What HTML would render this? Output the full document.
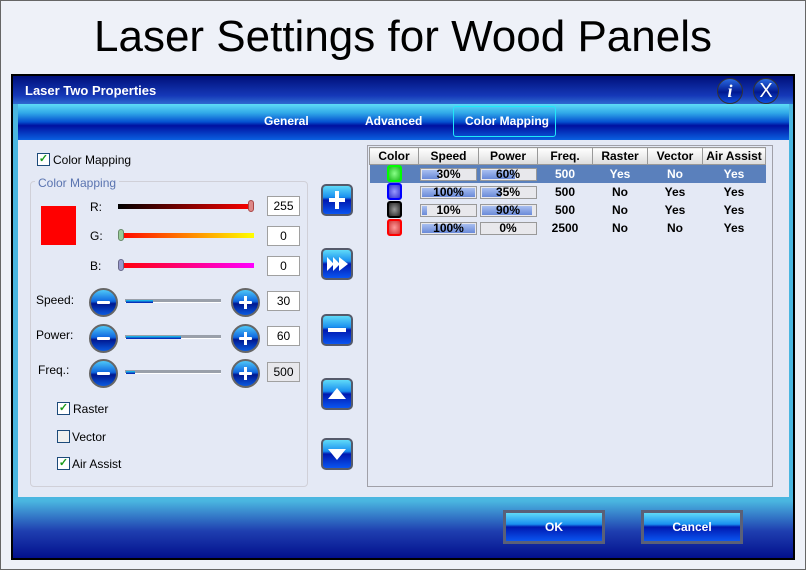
<!DOCTYPE html>
<html><head><style>
*{box-sizing:border-box;margin:0;padding:0}
body{width:806px;height:570px;background:#eef1f8;position:relative;overflow:hidden;font-family:"Liberation Sans",sans-serif;box-shadow:inset 0 0 0 1px #666}
.abs{position:absolute}
h1{position:absolute;left:0;width:806px;top:12px;text-align:center;font-weight:normal;font-size:44px;color:#000}
#dlg{left:11px;top:74px;width:784px;height:486px;border:2px solid #000;background:linear-gradient(#4ab6e0 0,#4ab6e0 425px,#1f3fb0 455px,#000c8a 484px)}
#tbar{left:0;top:0;width:780px;height:28px;background:linear-gradient(#00107a,#1538b8 70%,#2f6ad0)}
#tabs{left:5px;top:28px;width:771px;height:36px;background:linear-gradient(#5fdcf6 0,#30a8e8 25%,#0450d0 50%,#0010a0 60%,#0a60e0 100%)}
.tab{position:absolute;top:10px;color:#fff;font-weight:bold;font-size:12px}
#panel{left:5px;top:64px;width:771px;height:357px;background:#e4e9f5}
.btnsq{position:absolute;width:32px;height:32px;border:2px solid #555a6a;border-radius:5px;background:linear-gradient(#5fdaf8,#1a90f0 40%,#0018b0 50%,#0a55f0 100%)}
.circ{position:absolute;width:29px;height:29px;border-radius:50%;border:2px solid #666;background:linear-gradient(#4ec8f8,#1068e0 45%,#001890 55%,#0a5ae0)}
.circ:before{content:"";position:absolute;left:6px;top:11px;width:13px;height:3px;background:#fff;border-radius:1px}
.circ.p:after{content:"";position:absolute;left:11px;top:6px;width:3px;height:13px;background:#fff}
.tb{position:absolute;width:33px;height:20px;border:1px solid #a0a0a0;background:#fff;font-size:12px;text-align:center;line-height:18px}
.lbl{position:absolute;font-size:12px}
.cb{position:absolute;width:13px;height:13px;border:1px solid #1c4a7a;background:#fff;font-size:11px;color:#1a9a1a;line-height:11px;text-align:center;font-weight:bold}
.trk{position:absolute;height:4px;background:#9aa0aa;border-bottom:1px solid #fff}
table{border-collapse:collapse;font-size:12px;font-weight:bold}
td{text-align:center;height:18px;padding:0}
th{height:17px;background:linear-gradient(#fff,#dcdcdc);border:1px solid #999;font-size:12px}
.bar{display:inline-block;width:57px;height:13px;border:1px solid #999;background:#e8e8ec;position:relative;vertical-align:middle;font-size:12px;line-height:11px}
.bar i{position:absolute;left:1px;top:1px;bottom:1px;background:linear-gradient(#a8bff0,#6a8ad8)}
.bar span{position:relative}
.sw{display:inline-block;width:15px;height:17px;border:2px solid;border-radius:3px;vertical-align:middle}
.big{position:absolute;width:102px;height:34px;border:3px solid #5a6078;background:linear-gradient(#5fdaf8,#1a90f0 40%,#0018b0 50%,#0a55f0 100%);color:#fff;font-weight:bold;font-size:12px;text-align:center;line-height:28px}
</style></head><body>
<h1>Laser Settings for Wood Panels</h1>
<div id="dlg" class="abs">
 <div id="tbar" class="abs"><div class="abs" style="left:12px;top:7px;color:#fff;font-weight:bold;font-size:13px">Laser Two Properties</div>
  <div class="abs" style="left:704px;top:2px;width:26px;height:26px;border-radius:50%;border:1px solid #333;background:linear-gradient(#2a6ae0,#001890 55%,#1050e0);color:#fff;font:italic bold 18px 'Liberation Serif',serif;text-align:center;line-height:24px">i</div>
  <div class="abs" style="left:740px;top:2px;width:26px;height:26px;border-radius:50%;border:1px solid #333;background:linear-gradient(#2a6ae0,#001890 55%,#1050e0);color:#fff;font-size:20px;text-align:center;line-height:24px">X</div>
 </div>
 <div id="tabs" class="abs">
  <div class="tab" style="left:246px">General</div>
  <div class="tab" style="left:347px">Advanced</div>
  <div class="abs" style="left:435px;top:2px;width:103px;height:31px;border:1px solid #20e8f8;border-radius:3px"></div>
  <div class="tab" style="left:447px">Color Mapping</div>
 </div>
 <div id="panel" class="abs"></div>
 <div class="big" style="left:490px;top:434px">OK</div>
 <div class="big" style="left:628px;top:434px">Cancel</div>
</div>
<div class="cb" style="left:37px;top:153px">✓</div><div class="lbl" style="left:53px;top:153px">Color Mapping</div>
<div class="abs" style="left:30px;top:181px;width:278px;height:306px;border:1px solid #d0d0d8;border-radius:4px"></div>
<div class="lbl" style="left:35px;top:176px;background:#e4e9f5;color:#5a74b0;padding:0 3px">Color Mapping</div>
<div class="abs" style="left:41px;top:206px;width:35px;height:39px;background:#f00"></div>
<div class="lbl" style="left:90px;top:200px">R:</div><div class="lbl" style="left:90px;top:229px">G:</div><div class="lbl" style="left:90px;top:259px">B:</div>
<div class="abs" style="left:118px;top:204px;width:136px;height:5px;background:linear-gradient(90deg,#000,#f00)"></div>
<div class="abs" style="left:248px;top:200px;width:6px;height:12px;border-radius:3px;background:#d88;border:1px solid #a44"></div>
<div class="abs" style="left:118px;top:233px;width:136px;height:5px;background:linear-gradient(90deg,#f00,#ff0)"></div>
<div class="abs" style="left:118px;top:229px;width:6px;height:12px;border-radius:3px;background:#9c9;border:1px solid #686"></div>
<div class="abs" style="left:118px;top:263px;width:136px;height:5px;background:linear-gradient(90deg,#f00,#f0f)"></div>
<div class="abs" style="left:118px;top:259px;width:6px;height:12px;border-radius:3px;background:#99c;border:1px solid #668"></div>
<div class="tb" style="left:267px;top:196px">255</div><div class="tb" style="left:267px;top:226px">0</div><div class="tb" style="left:267px;top:256px">0</div>
<div class="lbl" style="left:36px;top:293px">Speed:</div><div class="lbl" style="left:36px;top:328px">Power:</div><div class="lbl" style="left:38px;top:363px">Freq.:</div>
<div class="circ" style="left:89px;top:288px"></div><div class="circ p" style="left:231px;top:288px"></div>
<div class="circ" style="left:89px;top:324px"></div><div class="circ p" style="left:231px;top:324px"></div>
<div class="circ" style="left:89px;top:359px"></div><div class="circ p" style="left:231px;top:359px"></div>
<div class="trk" style="left:125px;top:299px;width:96px"></div><div class="abs" style="left:126px;top:300px;width:27px;height:3px;background:linear-gradient(#20d0f0,#0010b0)"></div>
<div class="trk" style="left:125px;top:335px;width:96px"></div><div class="abs" style="left:126px;top:336px;width:55px;height:3px;background:linear-gradient(#20d0f0,#0010b0)"></div>
<div class="trk" style="left:125px;top:370px;width:96px"></div><div class="abs" style="left:126px;top:371px;width:9px;height:3px;background:linear-gradient(#20d0f0,#0010b0)"></div>
<div class="tb" style="left:267px;top:291px">30</div><div class="tb" style="left:267px;top:326px">60</div><div class="tb" style="left:267px;top:362px;background:#e8e8ec">500</div>
<div class="cb" style="left:57px;top:402px">✓</div><div class="lbl" style="left:73px;top:402px">Raster</div>
<div class="cb" style="left:57px;top:430px;background:#f0f0ee"></div><div class="lbl" style="left:72px;top:430px">Vector</div>
<div class="cb" style="left:57px;top:457px">✓</div><div class="lbl" style="left:72px;top:457px">Air Assist</div>
<div class="btnsq" style="left:321px;top:184px"><div class="abs" style="left:6px;top:12px;width:16px;height:4px;background:#fff"></div><div class="abs" style="left:12px;top:5px;width:4px;height:18px;background:#fff"></div></div>
<div class="btnsq" style="left:321px;top:248px"><svg class="abs" style="left:3px;top:6px" width="24" height="16"><path d="M1 1L8 8L1 15ZM7 1L14 8L7 15ZM13 1L22 8L13 15Z" fill="#fff"/></svg></div>
<div class="btnsq" style="left:321px;top:314px"><div class="abs" style="left:5px;top:12px;width:18px;height:4px;background:#fff"></div></div>
<div class="btnsq" style="left:321px;top:378px"><svg class="abs" style="left:5px;top:7px" width="20" height="14"><path d="M0 12L9 1L18 12Z" fill="#fff"/></svg></div>
<div class="btnsq" style="left:321px;top:438px"><svg class="abs" style="left:5px;top:8px" width="20" height="14"><path d="M0 1L18 1L9 12Z" fill="#fff"/></svg></div>
<div class="abs" style="left:367px;top:145px;width:406px;height:342px;border:1px solid #a0a0a8;background:#e4e9f5"></div>
<table class="abs" style="left:369px;top:147px">
<tr><th style="width:49px">Color</th><th style="width:60px">Speed</th><th style="width:59px">Power</th><th style="width:55px">Freq.</th><th style="width:55px">Raster</th><th style="width:55px">Vector</th><th style="width:63px">Air Assist</th></tr>
<tr style="background:#5a80bc;color:#fff"><td><span class="sw" style="border-color:#0f0;background:radial-gradient(#8f8,#2b2)"></span></td><td><span class="bar" style="color:#000"><i style="width:17px"></i><span>30%</span></span></td><td><span class="bar" style="color:#000"><i style="width:33px"></i><span>60%</span></span></td><td>500</td><td>Yes</td><td>No</td><td>Yes</td></tr>
<tr><td><span class="sw" style="border-color:#00f;background:radial-gradient(#99f,#33c)"></span></td><td><span class="bar"><i style="right:1px"></i><span>100%</span></span></td><td><span class="bar"><i style="width:19px"></i><span>35%</span></span></td><td>500</td><td>No</td><td>Yes</td><td>Yes</td></tr>
<tr><td><span class="sw" style="border-color:#000;background:radial-gradient(#999,#222)"></span></td><td><span class="bar"><i style="width:5px"></i><span>10%</span></span></td><td><span class="bar"><i style="width:50px"></i><span>90%</span></span></td><td>500</td><td>No</td><td>Yes</td><td>Yes</td></tr>
<tr><td><span class="sw" style="border-color:#f00;background:radial-gradient(#f99,#c33)"></span></td><td><span class="bar"><i style="right:1px"></i><span>100%</span></span></td><td><span class="bar"><span>0%</span></span></td><td>2500</td><td>No</td><td>No</td><td>Yes</td></tr>
</table>
</body></html>
